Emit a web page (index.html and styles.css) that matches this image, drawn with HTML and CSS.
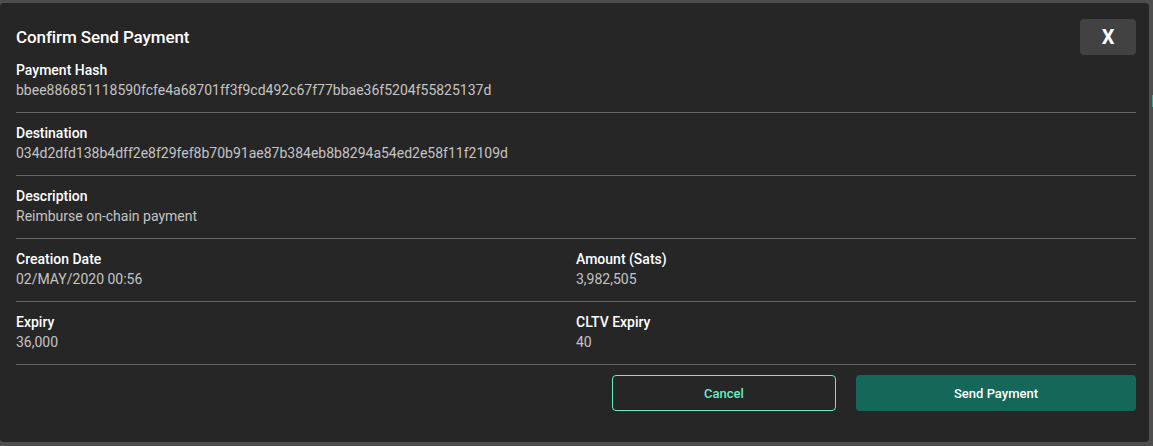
FILE: index.html
```html
<!DOCTYPE html>
<html>
<head>
<meta charset="utf-8">
<link rel="stylesheet" href="styles.css">
</head>
<body>
<div class="dialog">
  <div class="header">
    <div class="title">Confirm Send Payment</div>
    <button class="close">X</button>
  </div>
  <div class="section first">
    <div class="label">Payment Hash</div>
    <div class="value">bbee886851118590fcfe4a68701ff3f9cd492c67f77bbae36f5204f55825137d</div>
  </div>
  <div class="section">
    <div class="label">Destination</div>
    <div class="value">034d2dfd138b4dff2e8f29fef8b70b91ae87b384eb8b8294a54ed2e58f11f2109d</div>
  </div>
  <div class="section">
    <div class="label">Description</div>
    <div class="value">Reimburse on-chain payment</div>
  </div>
  <div class="section cols">
    <div class="col">
      <div class="label">Creation Date</div>
      <div class="value">02/MAY/2020 00:56</div>
    </div>
    <div class="col">
      <div class="label">Amount (Sats)</div>
      <div class="value">3,982,505</div>
    </div>
  </div>
  <div class="section cols">
    <div class="col">
      <div class="label">Expiry</div>
      <div class="value">36,000</div>
    </div>
    <div class="col">
      <div class="label">CLTV Expiry</div>
      <div class="value">40</div>
    </div>
  </div>
  <div class="actions">
    <button class="btn cancel">Cancel</button>
    <button class="btn send">Send Payment</button>
  </div>
</div>
<div class="edge"></div>
</body>
</html>
```
FILE: styles.css
```css
html, body {
  margin: 0;
  padding: 0;
  background: #4e4e4e;
  height: 446px;
  overflow: hidden;
}
body {
  font-family: Roboto, "Liberation Sans", sans-serif;
  color: #ffffff;
}
.dialog {
  margin-top: 3px;
  width: 1149px;
  height: 439px;
  box-sizing: border-box;
  background: #262626;
  border-radius: 4px;
  padding: 16px 13px 0 16px;
}
.header {
  display: flex;
  align-items: center;
  justify-content: space-between;
  height: 36px;
}
.title {
  font-size: 17px;
  font-weight: 500;
  line-height: 20px;
  letter-spacing: -0.1px;
}
.close {
  width: 56px;
  height: 36px;
  border: none;
  border-radius: 4px;
  background: #424242;
  color: #ffffff;
  font-family: Roboto, "Liberation Sans", sans-serif;
  font-weight: 700;
  font-size: 20px;
  padding: 0;
  cursor: pointer;
}
.section {
  padding: 10px 0 12px;
  border-bottom: 1px solid #666666;
}
.section.first {
  padding-top: 5px;
  padding-bottom: 12px;
}
.label {
  font-size: 14px;
  font-weight: 500;
  line-height: 20px;
}
.value {
  font-size: 14px;
  line-height: 20px;
  color: #c4c4c4;
}
.cols {
  display: flex;
}
.col {
  flex: 1 1 0;
}
.actions {
  display: flex;
  justify-content: flex-end;
  gap: 20px;
  padding-top: 10px;
}
.btn {
  height: 36px;
  border-radius: 4px;
  font-family: Roboto, "Liberation Sans", sans-serif;
  font-size: 13px;
  font-weight: 500;
  cursor: pointer;
}
.cancel {
  width: 224px;
  background: transparent;
  border: 1px solid #68ecc6;
  color: #68ecc6;
}
.send {
  width: 280px;
  border: none;
  background: #156759;
  color: #ffffff;
}
.edge {
  position: absolute;
  left: 1152px;
  top: 95px;
  width: 1px;
  height: 12px;
  background: #3aa58c;
}
```
